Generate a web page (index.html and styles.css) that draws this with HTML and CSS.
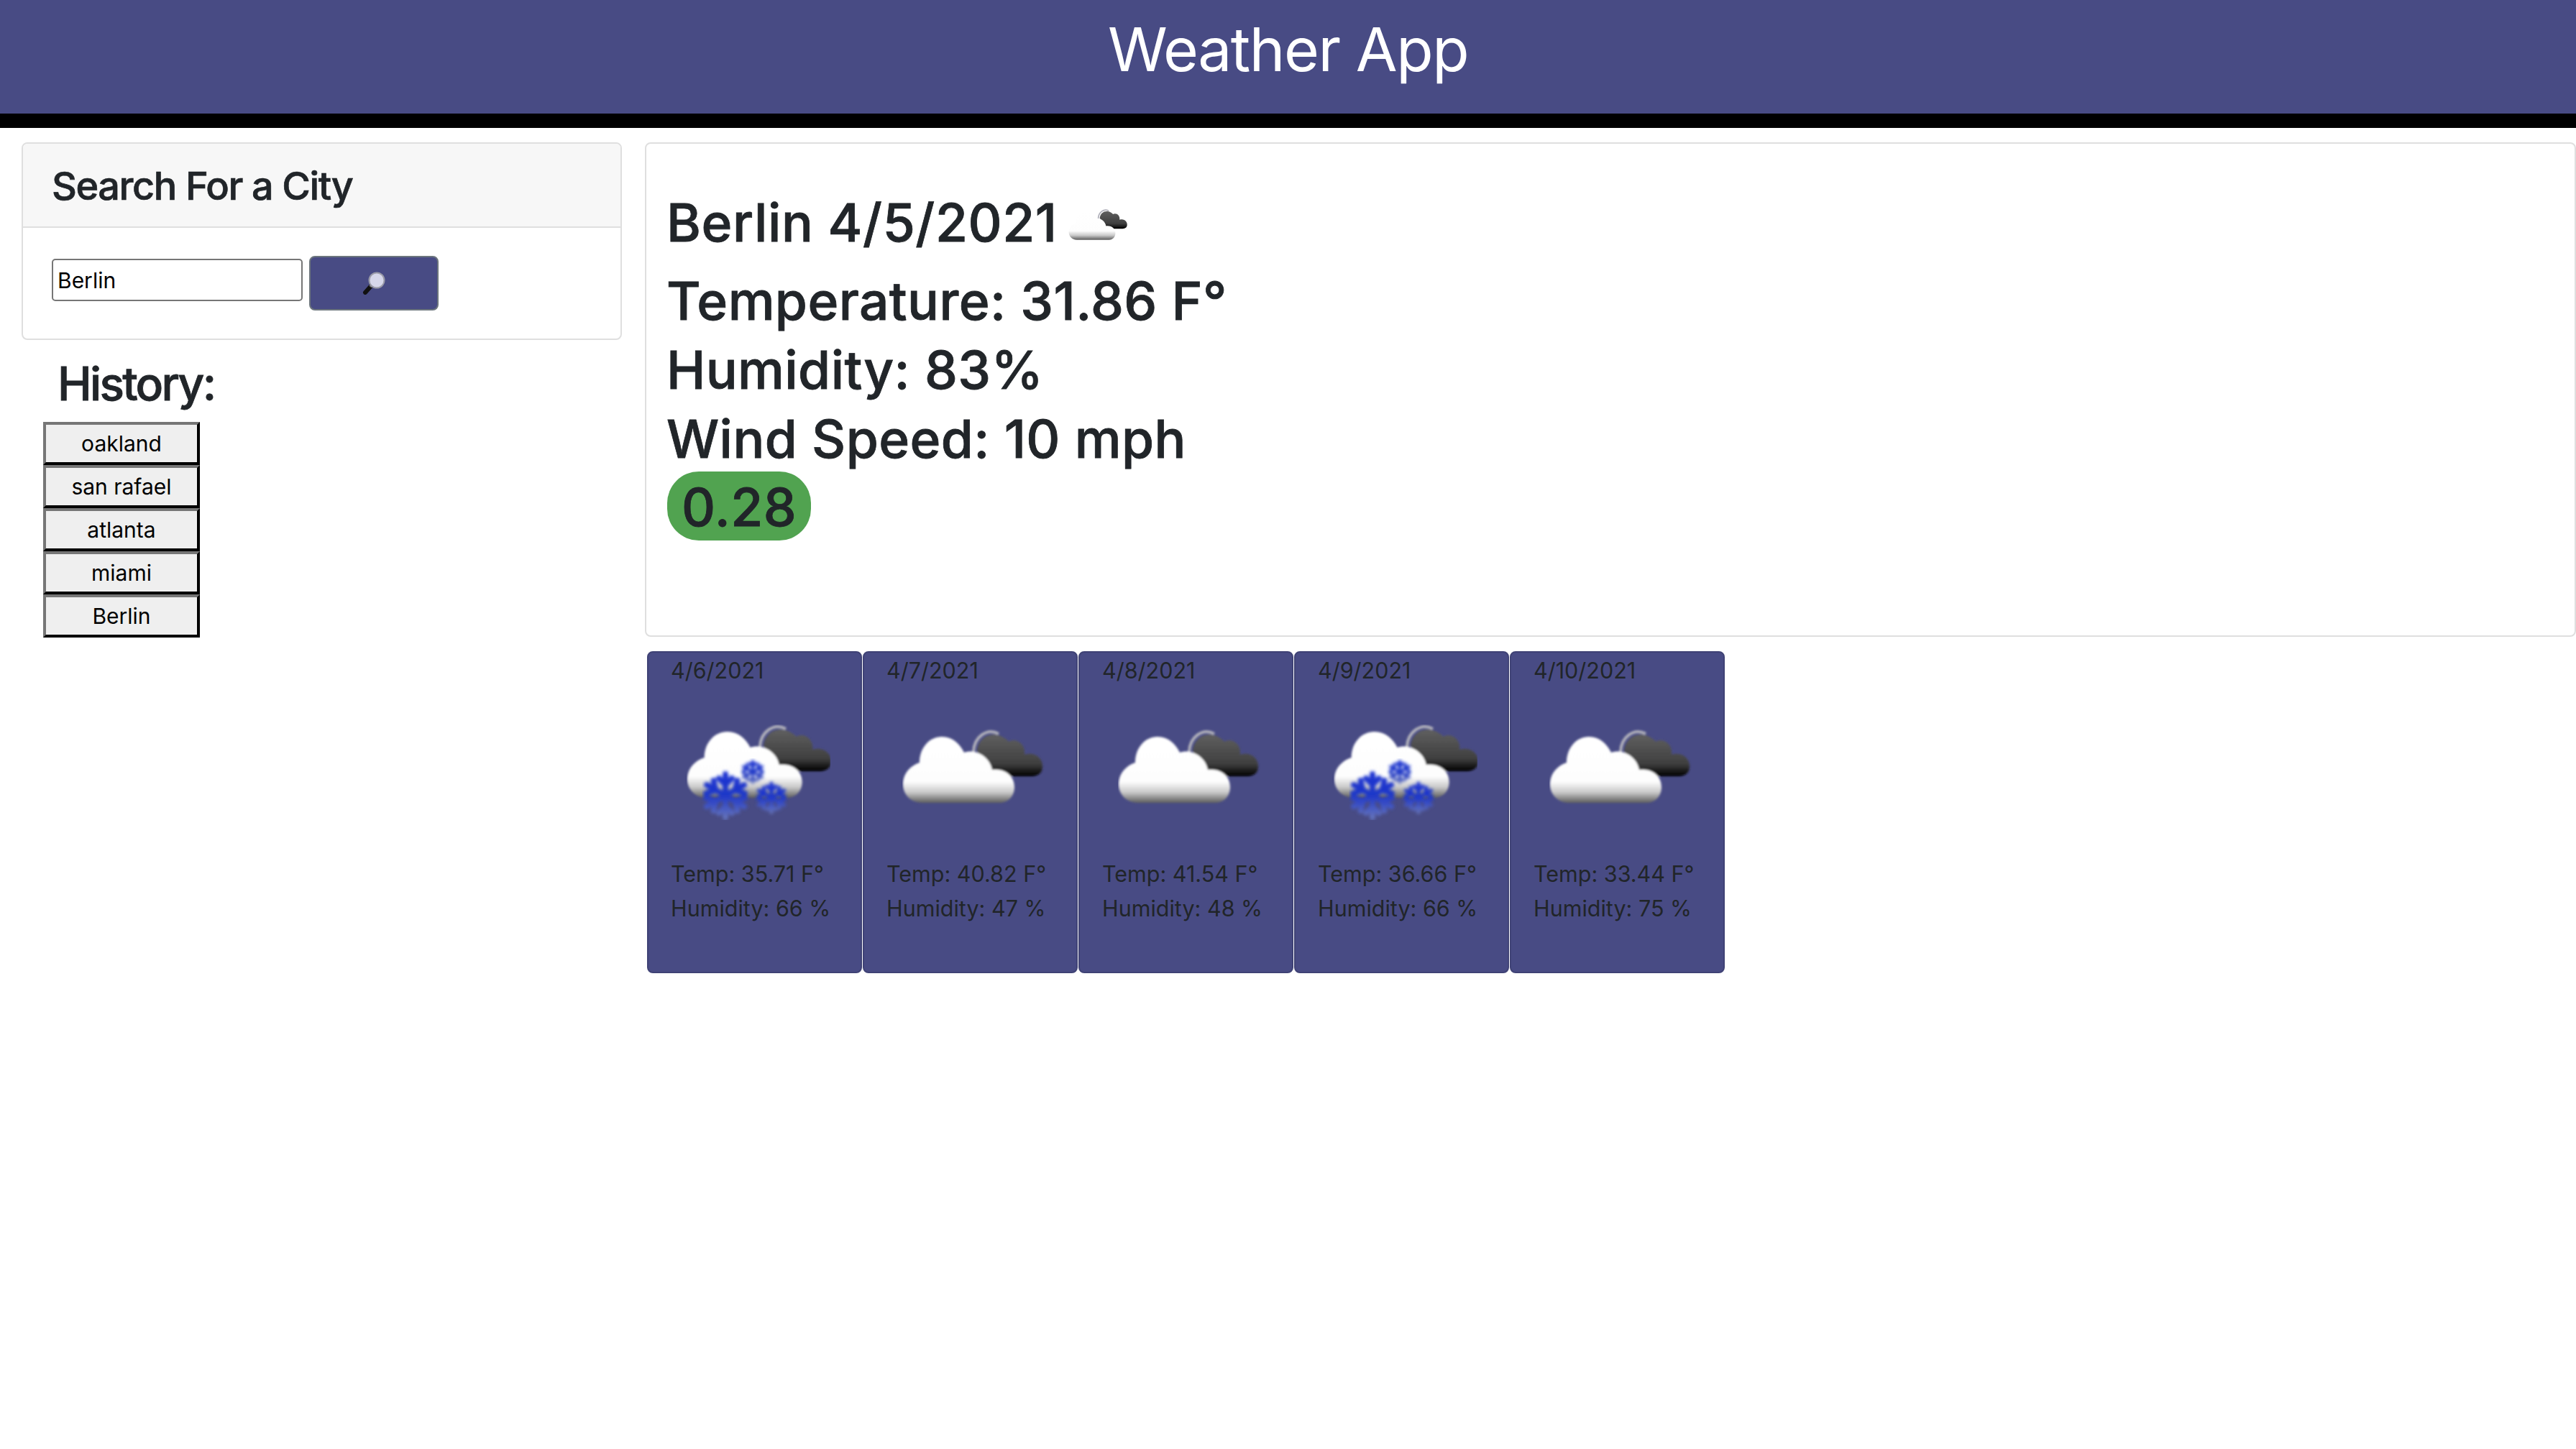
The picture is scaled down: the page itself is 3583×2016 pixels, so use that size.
FILE: index.html
```html
<!DOCTYPE html>
<html lang="en">
<head>
    <meta charset="UTF-8">
    <title>Weather App</title>
    <link rel="stylesheet" href="styles.css">
</head>
<body>
    <header class="top-bar">
        <h1>Weather App</h1>
    </header>

    <div class="page">
        <aside class="side">
            <div class="card">
                <h4 class="card-header">Search For a City</h4>
                <form class="search-form">
                    <input class="search-input" type="text" value="Berlin">
                    <button class="search-btn" type="button">
                        <svg class="search-icon" viewBox="0 0 32 32">
                            <path d="M12 20 L4 29" stroke="#111" stroke-width="6" stroke-linecap="round"/>
                            <path d="M14 17 L11 21" stroke="#777" stroke-width="4"/>
                            <circle cx="20" cy="12" r="10.5" fill="#d6d7ea" stroke="#9a9ba8" stroke-width="2"/>
                        </svg>
                    </button>
                </form>
            </div>

            <h3 class="history-title">History:</h3>
            <div class="history">
                <button class="history-btn" type="button">oakland</button>
                <button class="history-btn" type="button">san rafael</button>
                <button class="history-btn" type="button">atlanta</button>
                <button class="history-btn" type="button">miami</button>
                <button class="history-btn" type="button">Berlin</button>
            </div>
        </aside>

        <main class="content">
            <section class="current card">
                <h2 class="current-title">
                    Berlin 4/5/2021
                    <svg class="current-icon" viewBox="0 0 200 110">
                        <defs>
                            <linearGradient id="whiteCloud" x1="0" y1="0" x2="0" y2="1">
                                <stop offset="0" stop-color="#fff"/>
                                <stop offset="0.68" stop-color="#fdfdfd"/>
                                <stop offset="0.84" stop-color="#c9c9c9"/>
                                <stop offset="1" stop-color="#5d5d5d"/>
                            </linearGradient>
                            <linearGradient id="darkCloud" x1="0" y1="0" x2="0" y2="1">
                                <stop offset="0" stop-color="#5f5f5f"/>
                                <stop offset="0.7" stop-color="#3f3f3f"/>
                                <stop offset="1" stop-color="#000"/>
                            </linearGradient>
                            <linearGradient id="flakeBlue" gradientUnits="userSpaceOnUse" x1="0" y1="-1" x2="0" y2="1">
                                <stop offset="0" stop-color="#1a33d2"/>
                                <stop offset="0.5" stop-color="#2038c8"/>
                                <stop offset="1" stop-color="#6272bd"/>
                            </linearGradient>
                            <filter id="soft" x="-5%" y="-5%" width="110%" height="110%">
                                <feGaussianBlur stdDeviation="1.6"/>
                            </filter>
                            <filter id="softer" x="-5%" y="-5%" width="110%" height="110%">
                                <feGaussianBlur stdDeviation="2.2"/>
                            </filter>
                            <g id="clouds" filter="url(#soft)">
                                <path d="M104 30 C106 12 120 4 134 8 C140 10 146 14 148 17 C158 11 172 20 170 35 C186 30 196 42 195 52 C195 60 189 65 180 65 L125 65Z" fill="url(#darkCloud)"/>
                                <path d="M99 31 C100 10 118 -3 134 6" fill="none" stroke="#b0b0ba" stroke-width="4"/>
                                <path d="M28 102 C10 102 0 88 1 74 C2 60 12 50 24 46 C24 25 38 10 55 10 C70 10 80 20 86 32 C102 26 122 38 125 56 C145 54 156 66 156 80 C156 92 148 102 135 102Z" fill="url(#whiteCloud)"/>
                            </g>
                            <g id="flake" fill="none" stroke="url(#flakeBlue)" stroke-width="0.26" stroke-linecap="round">
                                <path d="M0 -1 V1 M-0.87 -0.5 L0.87 0.5 M-0.87 0.5 L0.87 -0.5"/>
                                <path d="M-0.3 -0.8 L0 -0.5 L0.3 -0.8 M-0.3 0.8 L0 0.5 L0.3 0.8"/>
                                <path d="M-0.9 -0.1 L-0.45 -0.25 L-0.55 -0.7 M0.9 -0.1 L0.45 -0.25 L0.55 -0.7"/>
                                <path d="M-0.9 0.1 L-0.45 0.25 L-0.55 0.7 M0.9 0.1 L0.45 0.25 L0.55 0.7"/>
                            </g>
                            <g id="snow" filter="url(#softer)">
                                <use href="#flake" transform="translate(54 99) scale(30)"/>
                                <use href="#flake" transform="translate(92 66) scale(15)"/>
                                <use href="#flake" transform="translate(118 102) scale(20)"/>
                            </g>
                        </defs>
                        <use href="#clouds"/>
                    </svg>
                </h2>
                <p class="current-line">Temperature: 31.86 F°</p>
                <p class="current-line">Humidity: 83%</p>
                <p class="current-line">Wind Speed: 10 mph</p>
                <span class="uv-pill">0.28</span>
            </section>

            <section class="forecast">
                <div class="day-card">
                    <div class="day-line">4/6/2021</div>
                    <div class="day-icon-box">
                        <svg class="day-icon" viewBox="0 0 200 140">
                            <g transform="scale(1.03 1)"><use href="#clouds"/></g>
                            <use href="#snow"/>
                        </svg>
                    </div>
                    <div class="day-line">Temp: 35.71 F°</div>
                    <div class="day-line">Humidity: 66 %</div>
                </div>
                <div class="day-card">
                    <div class="day-line">4/7/2021</div>
                    <div class="day-icon-box">
                        <svg class="day-icon" viewBox="0 0 200 140"><use href="#clouds" y="7"/></svg>
                    </div>
                    <div class="day-line">Temp: 40.82 F°</div>
                    <div class="day-line">Humidity: 47 %</div>
                </div>
                <div class="day-card">
                    <div class="day-line">4/8/2021</div>
                    <div class="day-icon-box">
                        <svg class="day-icon" viewBox="0 0 200 140"><use href="#clouds" y="7"/></svg>
                    </div>
                    <div class="day-line">Temp: 41.54 F°</div>
                    <div class="day-line">Humidity: 48 %</div>
                </div>
                <div class="day-card">
                    <div class="day-line">4/9/2021</div>
                    <div class="day-icon-box">
                        <svg class="day-icon" viewBox="0 0 200 140">
                            <g transform="scale(1.03 1)"><use href="#clouds"/></g>
                            <use href="#snow"/>
                        </svg>
                    </div>
                    <div class="day-line">Temp: 36.66 F°</div>
                    <div class="day-line">Humidity: 66 %</div>
                </div>
                <div class="day-card">
                    <div class="day-line">4/10/2021</div>
                    <div class="day-icon-box">
                        <svg class="day-icon" viewBox="0 0 200 140"><use href="#clouds" y="7"/></svg>
                    </div>
                    <div class="day-line">Temp: 33.44 F°</div>
                    <div class="day-line">Humidity: 75 %</div>
                </div>
            </section>
        </main>
    </div>
</body>
</html>
```

FILE: styles.css
```css
* {
    box-sizing: border-box;
}

body {
    margin: 0;
    font-family: Inter, "Liberation Sans", sans-serif;
    color: #212529;
    background: white;
}

.top-bar {
    height: 178px;
    background: #484b84;
    border-bottom: 20px solid black;
    text-align: center;
}

.top-bar h1 {
    margin: 0;
    padding-top: 24px;
    font-size: 84px;
    line-height: 90px;
    font-weight: 400;
    letter-spacing: -1.5px;
    color: white;
}

.page {
    display: grid;
    grid-template-columns: 835px 1fr;
    gap: 32px;
    padding: 20px 0 0 30px;
}

.card {
    border: 2px solid #dfdfdf;
    border-radius: 8px;
    background: white;
}

.card-header {
    margin: 0;
    padding: 26px 40px 23px;
    font-size: 54px;
    line-height: 66px;
    font-weight: 500;
    letter-spacing: -1.4px;
    -webkit-text-stroke: 0.7px #212529;
    background: #f7f7f7;
    border-bottom: 2px solid #dfdfdf;
    border-radius: 6px 6px 0 0;
}

.search-form {
    display: flex;
    align-items: flex-start;
    gap: 9px;
    padding: 39px 40px;
}

.search-input {
    width: 349px;
    height: 59px;
    margin-top: 4px;
    padding: 0 6px;
    border: 2px solid #767676;
    border-radius: 5px;
    font-family: inherit;
    font-size: 30px;
    color: black;
}

.search-btn {
    display: flex;
    align-items: center;
    justify-content: center;
    width: 180px;
    height: 76px;
    padding: 0;
    background: #484b84;
    border: 2px solid #6c757d;
    border-radius: 8px;
}

.search-icon {
    width: 32px;
    height: 32px;
}

.history-title {
    margin: 22px 0 15px 50px;
    font-size: 64px;
    line-height: 77px;
    font-weight: 500;
    letter-spacing: -2.7px;
    -webkit-text-stroke: 0.8px #212529;
}

.history {
    display: flex;
    flex-direction: column;
    align-items: flex-start;
    padding-left: 30px;
}

.history-btn {
    width: 218px;
    height: 60px;
    padding: 0;
    font-family: inherit;
    font-size: 30px;
    color: black;
    background: #efefef;
    border: 4px outset #767676;
    border-color: #767676 #212121 #212121 #767676;
}

.current {
    height: 688px;
    padding: 66px 28px 0;
}

.current-title {
    display: flex;
    align-items: flex-end;
    gap: 15px;
    margin: 0 0 20px;
    font-size: 73px;
    line-height: 88px;
    font-weight: 500;
    letter-spacing: 0.6px;
    -webkit-text-stroke: 0.8px #212529;
}

.current-icon {
    width: 84px;
    height: 46px;
    margin-bottom: 17px;
}

.current-line {
    margin: 0 0 6px;
    font-size: 73px;
    line-height: 90px;
    font-weight: 500;
    letter-spacing: 0.4px;
    -webkit-text-stroke: 0.8px #212529;
}

.uv-pill {
    display: inline-block;
    height: 96px;
    margin: -6px 0 0 1px;
    padding: 0 20px;
    font-size: 73px;
    line-height: 100px;
    font-weight: 500;
    letter-spacing: 0.5px;
    -webkit-text-stroke: 0.8px #212529;
    background: #51a350;
    border-radius: 44px;
}

.forecast {
    display: flex;
    gap: 1px;
    margin: 20px 0 0 3px;
}

.day-card {
    width: 299px;
    height: 448px;
    padding: 0 31px;
    background: #484b84;
    border: 2px solid #3f4275;
    border-radius: 8px;
}

.day-line {
    font-size: 30.5px;
    line-height: 48px;
    padding-top: 1px;
    margin-bottom: -1px;
}

.day-icon-box {
    height: 235px;
    padding: 52px 0 0 22px;
}

.day-icon {
    display: block;
    width: 200px;
    height: 140px;
}
```
